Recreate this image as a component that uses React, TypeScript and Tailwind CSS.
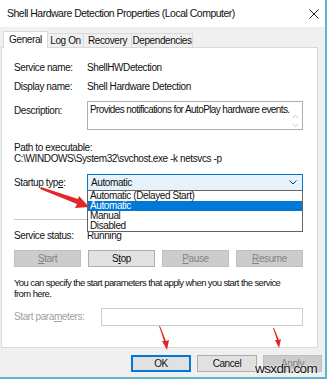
import React from "react";

const txt = "text-[10px] tracking-[-0.4px] leading-none";

function Btn({
  children,
  disabled,
  focused,
}: {
  children: React.ReactNode;
  disabled?: boolean;
  focused?: boolean;
}) {
  return (
    <div
      className={`h-[17px] flex items-center justify-center border ${txt} ${
        disabled
          ? "bg-[#cccccc] border-[#bfbfbf] text-[#838383]"
          : focused
          ? "bg-[#e1e1e1] border-[#0078d7] border-2 text-[#111]"
          : "bg-[#e1e1e1] border-[#adadad] text-[#111]"
      }`}
    >
      {children}
    </div>
  );
}

function Tab({ label, w, active }: { label: string; w: string; active?: boolean }) {
  return (
    <div
      className={`${w} -ml-px first:ml-0 border border-b-0 border-[#d9d9d9] flex items-center justify-center ${txt} ${
        active ? "h-[17px] bg-white relative z-10 -mb-px" : "h-[14px] bg-[#f0f0f0]"
      }`}
    >
      {label}
    </div>
  );
}

function Arrows() {
  return (
    <svg className="absolute inset-0 pointer-events-none z-30" width="328" height="380">
      {/* startup type arrow */}
      <polygon points="41,187 78,199 79,196 89,207 75,208 77,204 40,189" fill="#e3262b" />
      {/* OK arrow */}
      <polygon points="159,326 164,341 162,341 167,350 169,340 166,341 160,326" fill="#e3262b" />
      {/* Apply arrow */}
      <polygon points="273,328 277,340 275,340 279,348 281,339 279,340 274,328" fill="#e3262b" />
    </svg>
  );
}

export default function App() {
  return (
    <div className="w-[328px] h-[380px] bg-white relative overflow-hidden font-['Liberation_Sans',Arial,sans-serif] text-[#111]">
      <div className="w-[327px] h-[379px] border-r-2 border-b-2 border-[#5db6c6] bg-[#f0f0f0] flex flex-col">
        {/* title bar */}
        <div className="h-[27px] bg-white flex items-center justify-between pl-[7px] pr-[6px]">
          <span className="text-[10.5px] tracking-[-0.5px] leading-none text-[#111]">
            Shell Hardware Detection Properties (Local Computer)
          </span>
          <svg width="10" height="10" viewBox="0 0 10 10">
            <path d="M0.5 0.5 L9.5 9.5 M9.5 0.5 L0.5 9.5" stroke="#222" strokeWidth="1" />
          </svg>
        </div>

        {/* tabs */}
        <div className="pt-[4px] pl-[3px] flex items-end">
          <Tab label="General" w="w-[45px]" active />
          <Tab label="Log On" w="w-[37px]" />
          <Tab label="Recovery" w="w-[49px]" />
          <Tab label="Dependencies" w="w-[62px]" />
        </div>

        {/* panel */}
        <div className="ml-[1px] w-[317px] h-[301px] border border-[#d9d9d9] bg-white pl-[12px] pr-[14px] flex flex-col">
          <div className={`mt-[13px] h-[14px] flex items-center ${txt}`}>
            <span className="w-[73px]">Service name:</span>
            <span>ShellHWDetection</span>
          </div>
          <div className={`mt-[5px] h-[14px] flex items-center ${txt}`}>
            <span className="w-[73px]">Display name:</span>
            <span>Shell Hardware Detection</span>
          </div>
          <div className={`mt-[7px] flex ${txt}`}>
            <span className="w-[73px] pt-[5px]">Description:</span>
            <div className="flex-1 h-[29px] border border-[#abadb3] relative pl-[2px] pt-[3px]">
              <span className="tracking-[-0.6px] whitespace-nowrap">
                Provides notifications for AutoPlay hardware events.
              </span>
              <svg className="absolute right-[3px] top-[12px]" width="7" height="14" viewBox="0 0 7 14">
                <path d="M1 4 L3.5 1.5 L6 4 M1 10 L3.5 12.5 L6 10" stroke="#c4c4c4" fill="none" />
              </svg>
            </div>
          </div>
          <div className={`mt-[12px] h-[11px] flex items-center ${txt}`}>Path to executable:</div>
          <div className={`h-[11px] flex items-center ${txt}`}>
            C:\WINDOWS\System32\svchost.exe -k netsvcs -p
          </div>

          {/* startup type */}
          <div className={`mt-[10px] flex items-center relative ${txt}`}>
            <span className="w-[73px]">
              Startup typ<span className="underline">e</span>:
            </span>
            <div className="flex-1 h-[17px] border border-[#0078d7] bg-[#e5f1fb] flex items-center justify-between pl-[3px] pr-[5px]">
              <span>Automatic</span>
              <svg width="8" height="5" viewBox="0 0 8 5">
                <path d="M0.5 0.5 L4 4 L7.5 0.5" stroke="#333" fill="none" />
              </svg>
            </div>
            <div className="absolute top-[16px] left-[73px] right-0 h-[42px] border border-[#646464] bg-white z-20 flex flex-col">
              <div className="h-[10px] flex items-center pl-[2px]">Automatic (Delayed Start)</div>
              <div className="h-[10px] flex items-center pl-[2px] bg-[#0078d7] text-white">Automatic</div>
              <div className="h-[10px] flex items-center pl-[2px]">Manual</div>
              <div className="h-[10px] flex items-center pl-[2px]">Disabled</div>
            </div>
          </div>

          <div className="mt-[28px] h-px bg-[#c8c8c8]" />

          <div className={`mt-[9px] h-[14px] flex items-center ${txt}`}>
            <span className="w-[73px]">Service status:</span>
            <span>Running</span>
          </div>

          <div className="mt-[7px] grid grid-cols-4 gap-[7px]">
            <Btn disabled>
              <span className="underline">S</span>tart
            </Btn>
            <Btn>
              S<span className="underline">t</span>op
            </Btn>
            <Btn disabled>
              <span className="underline">P</span>ause
            </Btn>
            <Btn disabled>
              <span className="underline">R</span>esume
            </Btn>
          </div>

          <div className="mt-[10px] text-[9.5px] tracking-[-0.6px] leading-[11px] whitespace-nowrap">
            You can specify the start parameters that apply when you start the service
            <br />
            from here.
          </div>

          <div className={`mt-[9px] flex items-center ${txt}`}>
            <span className="w-[87px] text-[#a0a0a0]">
              Start para<span className="underline">m</span>eters:
            </span>
            <div className="flex-1 h-[18px] border border-[#cccccc] bg-white" />
          </div>
        </div>

        {/* dialog buttons */}
        <div className="mt-[7px] flex justify-end gap-[6px] pr-[3px]">
          <div className="w-[60px]">
            <Btn focused>OK</Btn>
          </div>
          <div className="w-[60px]">
            <Btn>Cancel</Btn>
          </div>
          <div className="w-[59px]">
            <Btn disabled>Apply</Btn>
          </div>
        </div>
      </div>

      <Arrows />
      <div className="absolute left-[255px] top-[362px] z-40 text-[13.5px] tracking-[-0.6px] leading-none text-[#111] [text-shadow:0_0_2px_#fff,0_0_2px_#fff]">
        wsxdn.com
      </div>
    </div>
  );
}
